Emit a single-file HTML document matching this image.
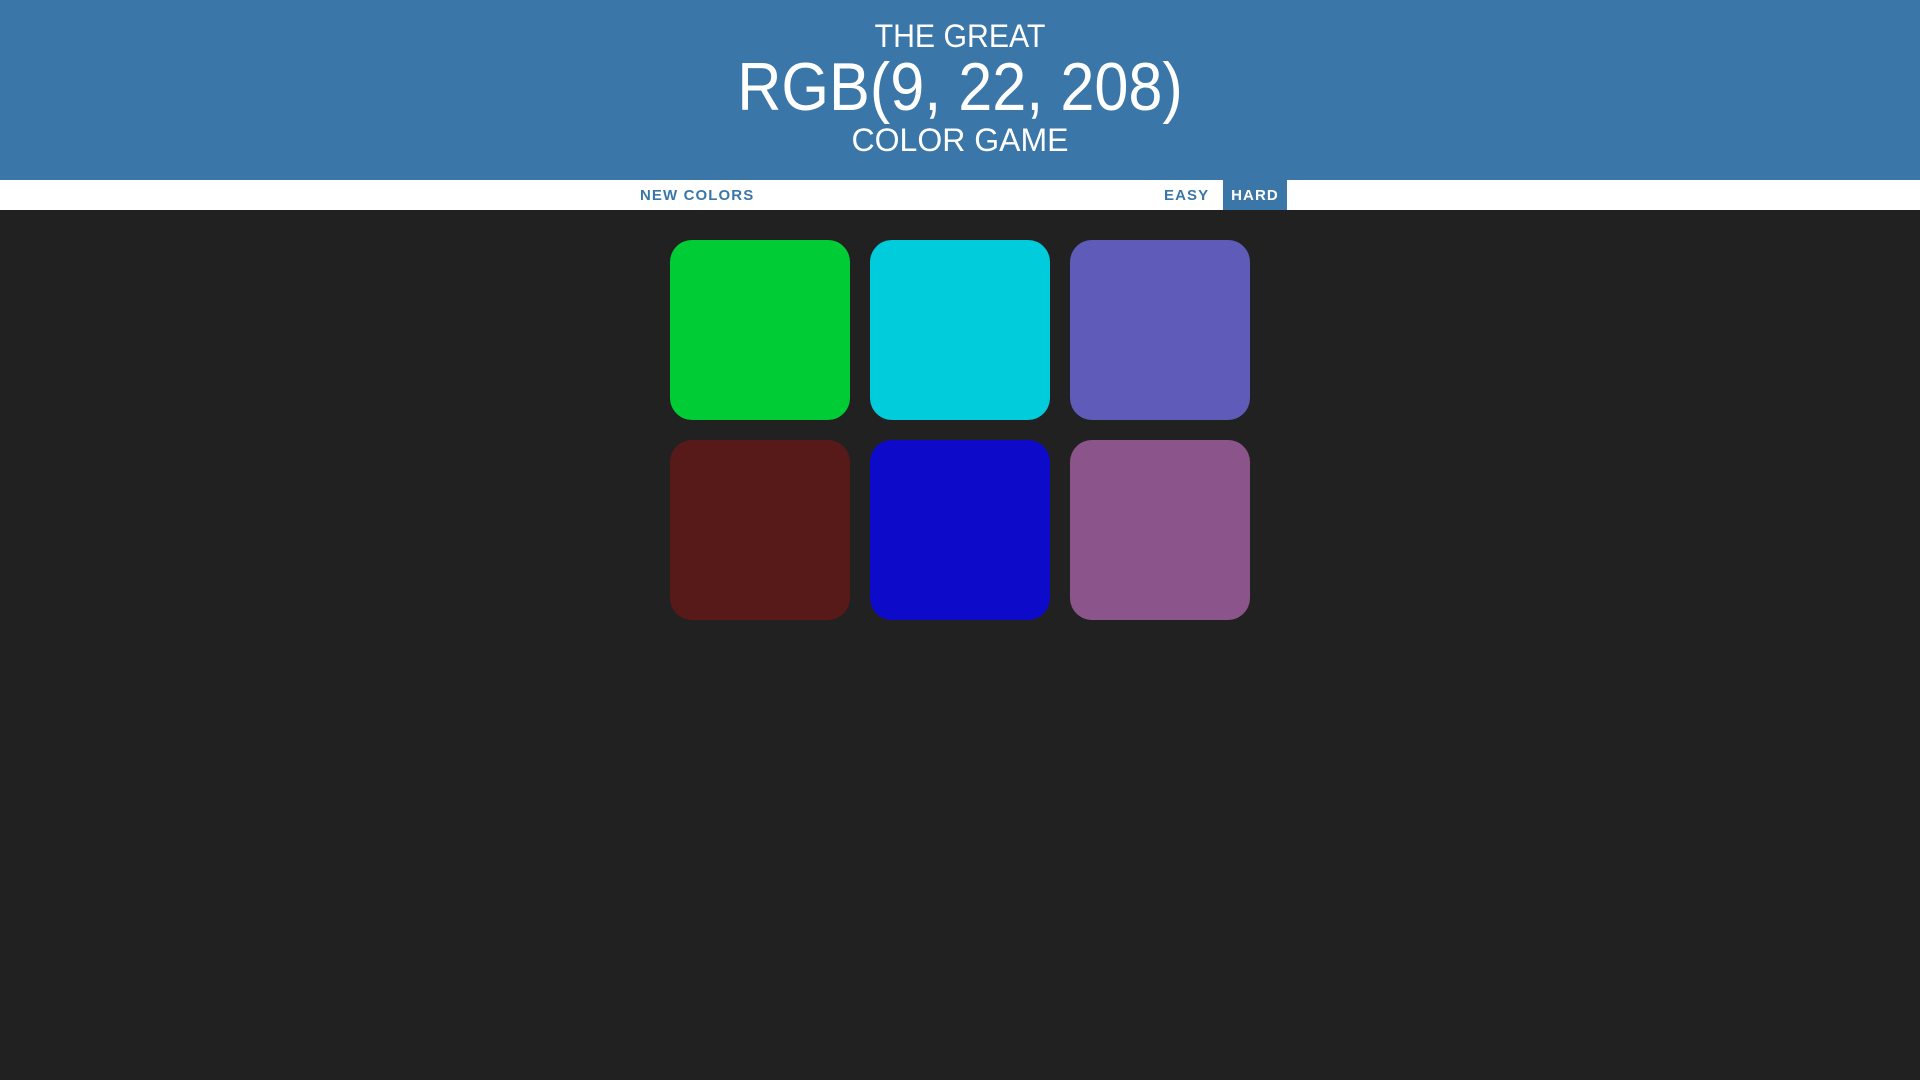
<!DOCTYPE html>
<html><head><meta charset="utf-8"><style>
html,body{margin:0;padding:0;width:1920px;height:1080px;background:#212121;overflow:hidden;font-family:"Liberation Sans",sans-serif}
#h{position:absolute;left:0;top:0;width:1920px;height:180px;background:#3a77a8;color:#fff;text-align:center}
.t{position:absolute;left:0;width:1920px;text-align:center;white-space:nowrap;line-height:1}
#nav{position:absolute;left:0;top:180px;width:1920px;height:30px;background:#fff}
.n{position:absolute;top:1px;height:30px;line-height:30px;font-weight:bold;font-size:15px;color:#3a77a8;letter-spacing:1.1px}
.s{position:absolute;width:180px;height:180px;border-radius:22px}
</style></head><body>
<div id="h">
<div class="t" style="top:20px;font-size:32px;transform:scaleX(0.945)">THE GREAT</div>
<div class="t" style="top:53px;font-size:68px;transform:scaleX(0.9)">RGB(9, 22, 208)</div>
<div class="t" style="top:124px;font-size:32px">COLOR GAME</div>
</div>
<div id="nav">
<div class="n" style="left:640px">NEW COLORS</div>
<div class="n" style="left:1164px">EASY</div>
<div class="n" style="left:1223px;top:0;width:64px;text-align:center;background:#3a77a8;color:#fff;line-height:32px">HARD</div>
</div>
<div class="s" style="left:670px;top:240px;background:#00cc36"></div>
<div class="s" style="left:870px;top:240px;background:#00ccdb"></div>
<div class="s" style="left:1070px;top:240px;background:#5f5cb9"></div>
<div class="s" style="left:670px;top:440px;background:#571a19"></div>
<div class="s" style="left:870px;top:440px;background:#0d0bc9"></div>
<div class="s" style="left:1070px;top:440px;background:#8b558b"></div>
</body></html>
